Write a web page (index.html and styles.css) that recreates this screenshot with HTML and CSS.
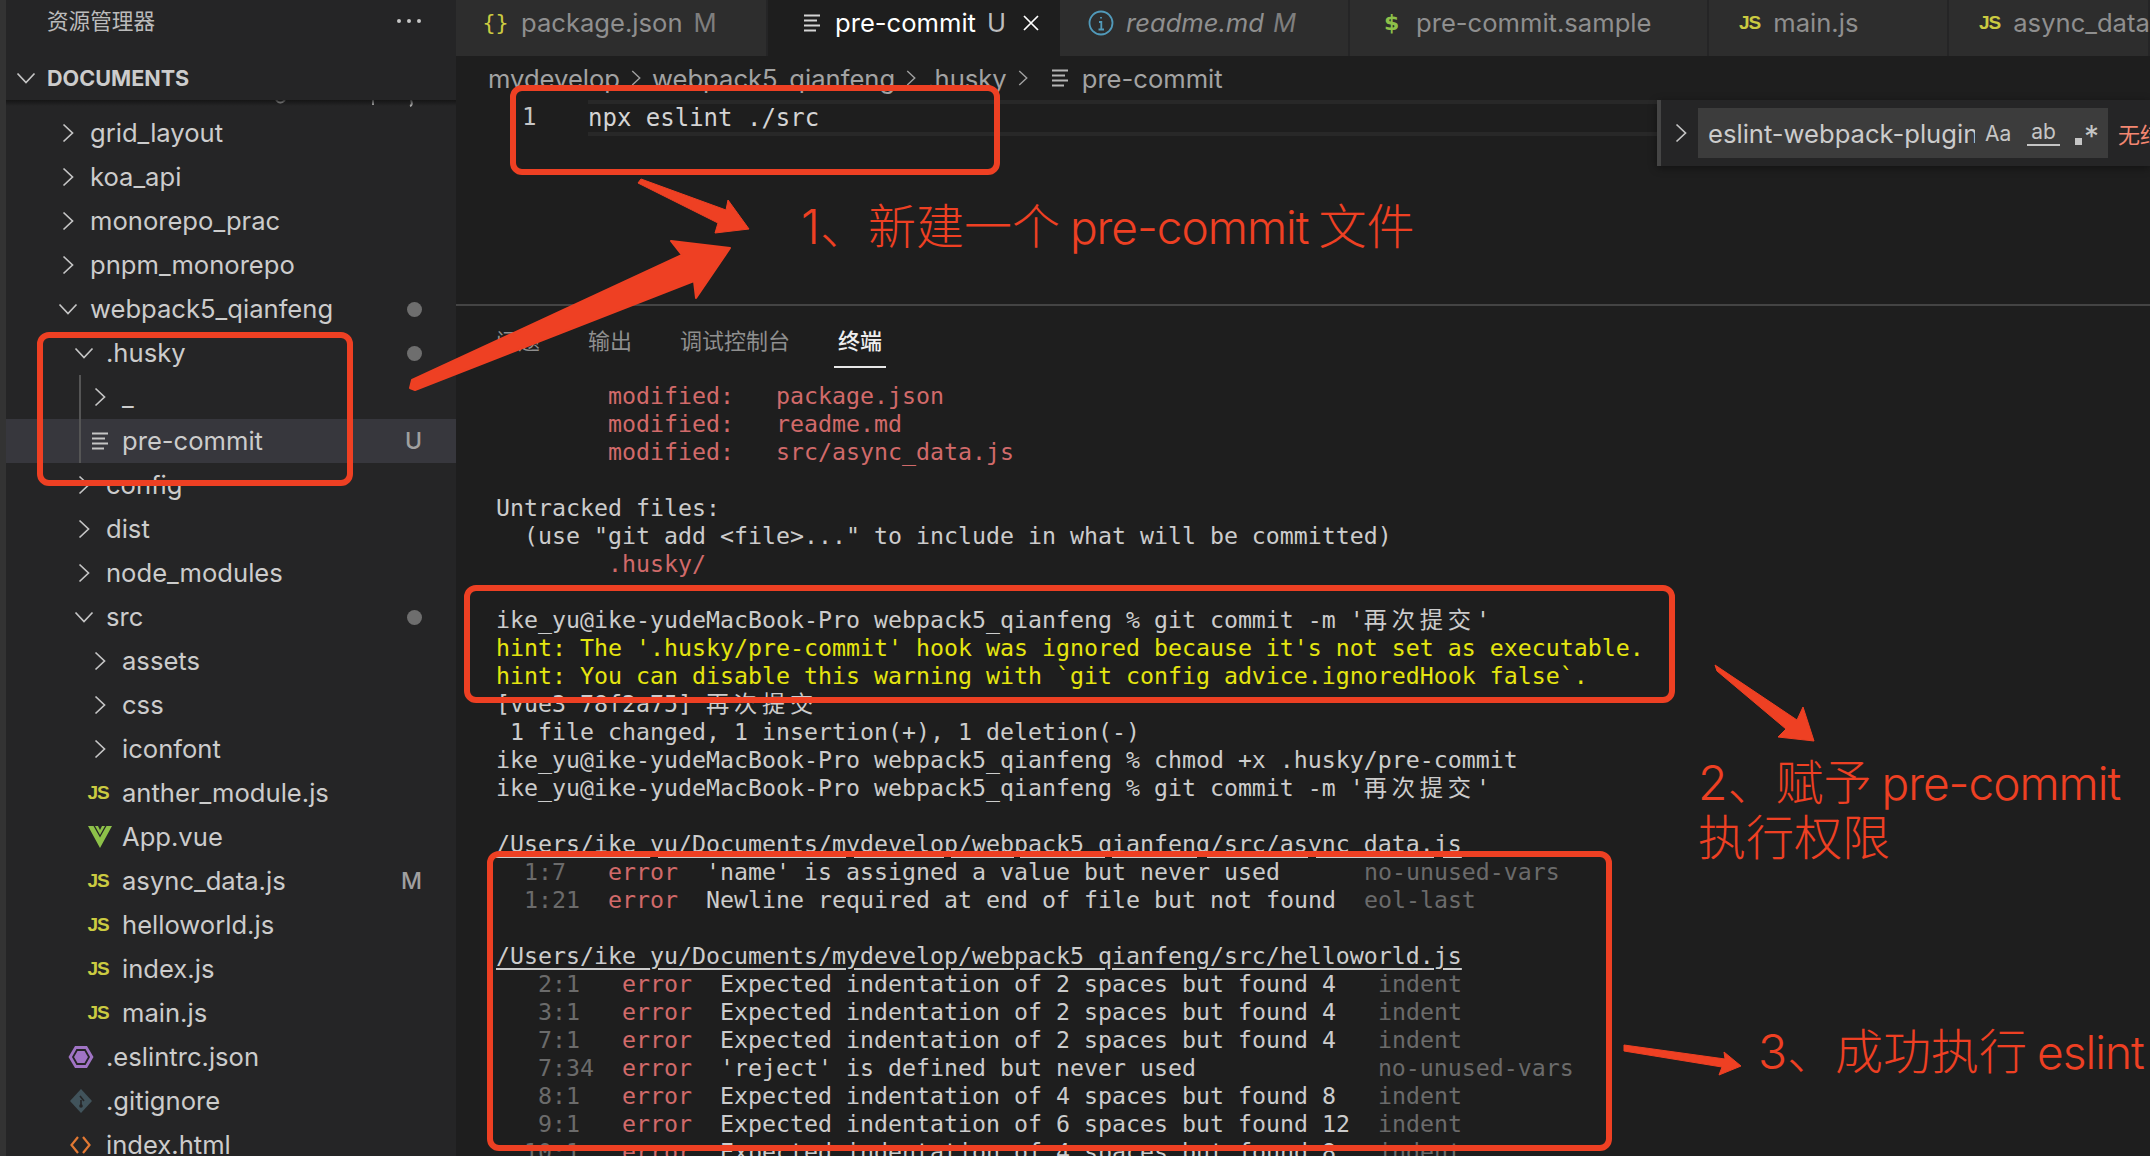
FILE: index.html
```html
<!DOCTYPE html>
<html lang="zh-CN">
<head>
<meta charset="utf-8">
<title>pre-commit</title>
<link rel="stylesheet" href="styles.css">
</head>
<body>
<svg class="defs" aria-hidden="true">
  <symbol id="cr" viewBox="0 0 12 20"><path d="M1.5 1.5 10.5 10 1.5 18.5" fill="none" stroke="currentColor" stroke-width="1.7"/></symbol>
  <symbol id="cd" viewBox="0 0 20 12"><path d="M1.5 1.5 10 10.5 18.5 1.5" fill="none" stroke="currentColor" stroke-width="1.7"/></symbol>
  <symbol id="doc" viewBox="0 0 17 18"><path d="M0 1.5h16M0 6.5h13M0 11.5h16M0 16.5h12" fill="none" stroke="currentColor" stroke-width="2"/></symbol>
</svg>
<div class="app">
  <aside class="sidebar">
    <div class="side-title"><span>资源管理器</span><span class="dots"><i></i><i></i><i></i></span></div>
    <div class="section"><svg class="sec-chev"><use href="#cd"/></svg><span>DOCUMENTS</span></div>
    <div class="tree">
      <div class="ghost"><svg width="450" height="11"><path d="M276 0q4 5 9 0M373 0v5M411 0q2 5-1 6" fill="none" stroke="#b0b0b0" stroke-width="2"/></svg></div>
      <div class="row d1"><span class="slot"><svg class="cr"><use href="#cr"/></svg></span><span class="label">grid_layout</span></div>
      <div class="row d1"><span class="slot"><svg class="cr"><use href="#cr"/></svg></span><span class="label">koa_api</span></div>
      <div class="row d1"><span class="slot"><svg class="cr"><use href="#cr"/></svg></span><span class="label">monorepo_prac</span></div>
      <div class="row d1"><span class="slot"><svg class="cr"><use href="#cr"/></svg></span><span class="label">pnpm_monorepo</span></div>
      <div class="row d1"><span class="slot"><svg class="cd"><use href="#cd"/></svg></span><span class="label">webpack5_qianfeng</span><span class="dot"></span></div>
      <div class="row d2"><span class="slot"><svg class="cd"><use href="#cd"/></svg></span><span class="label">.husky</span><span class="dot"></span></div>
      <div class="row d3 guide"><span class="slot"><svg class="cr"><use href="#cr"/></svg></span><span class="label">_</span></div>
      <div class="row d3 guide selected"><span class="slot"><svg class="docicon"><use href="#doc"/></svg></span><span class="label">pre-commit</span><span class="badge">U</span></div>
      <div class="row d2"><span class="slot"><svg class="cr"><use href="#cr"/></svg></span><span class="label">config</span></div>
      <div class="row d2"><span class="slot"><svg class="cr"><use href="#cr"/></svg></span><span class="label">dist</span></div>
      <div class="row d2"><span class="slot"><svg class="cr"><use href="#cr"/></svg></span><span class="label">node_modules</span></div>
      <div class="row d2"><span class="slot"><svg class="cd"><use href="#cd"/></svg></span><span class="label">src</span><span class="dot"></span></div>
      <div class="row d3"><span class="slot"><svg class="cr"><use href="#cr"/></svg></span><span class="label">assets</span></div>
      <div class="row d3"><span class="slot"><svg class="cr"><use href="#cr"/></svg></span><span class="label">css</span></div>
      <div class="row d3"><span class="slot"><svg class="cr"><use href="#cr"/></svg></span><span class="label">iconfont</span></div>
      <div class="row d3"><span class="slot"><span class="js">JS</span></span><span class="label">anther_module.js</span></div>
      <div class="row d3"><span class="slot"><svg class="vue" viewBox="0 0 24 22"><path d="M0 0h5.5L12 11.5 18.500 0H24L12 22z" fill="#8dc149"/><path d="M7 0h3l2 4 2-4h3l-5 9z" fill="#8dc149"/></svg></span><span class="label">App.vue</span></div>
      <div class="row d3"><span class="slot"><span class="js">JS</span></span><span class="label">async_data.js</span><span class="badge">M</span></div>
      <div class="row d3"><span class="slot"><span class="js">JS</span></span><span class="label">helloworld.js</span></div>
      <div class="row d3"><span class="slot"><span class="js">JS</span></span><span class="label">index.js</span></div>
      <div class="row d3"><span class="slot"><span class="js">JS</span></span><span class="label">main.js</span></div>
      <div class="row d2"><span class="slot"><svg class="eslint" viewBox="0 0 26 24"><path d="M7 1h12l6.500 11L19 23H7L.5 12z" fill="#a074c4"/><path d="M9 5h8l4 7-4 7H9l-4-7z" fill="#a074c4" stroke="#252526" stroke-width="1.800"/></svg></span><span class="label">.eslintrc.json</span></div>
      <div class="row d2"><span class="slot"><svg class="git" viewBox="0 0 22 24"><path d="M11 0 22 12 11 24 0 12z" fill="#41535b"/><path d="M10 7 14 12M11 11v6" fill="none" stroke="#252526" stroke-width="1.600"/><circle cx="11" cy="17" r="1.800" fill="#252526"/></svg></span><span class="label">.gitignore</span></div>
      <div class="row d2"><span class="slot"><svg class="html" viewBox="0 0 21 20"><path d="M8 2 1.500 10 8 18M13 2l6.500 8-6.500 8" fill="none" stroke="#e37933" stroke-width="2.200"/></svg></span><span class="label">index.html</span></div>
    </div>
  </aside>

  <main class="main">
    <div class="tabs">
      <div class="tab t1"><span class="ti braces">{ }</span><span class="tn">package.json</span><span class="ts">M</span></div>
      <div class="tab t2 active"><svg class="docicon"><use href="#doc"/></svg><span class="tn">pre-commit</span><span class="ts">U</span><svg class="close" viewBox="0 0 16 16"><path d="M1 1l14 14M15 1 1 15" fill="none" stroke="#fff" stroke-width="1.700"/></svg></div>
      <div class="tab t3 it"><svg class="info" viewBox="0 0 26 26"><circle cx="13" cy="13" r="11.500" fill="none" stroke="#519aba" stroke-width="1.800"/><path d="M13 7v1.600M11 12h2.300v7M10.500 19.500h5.500" fill="none" stroke="#519aba" stroke-width="1.800"/></svg><span class="tn">readme.md</span><span class="ts">M</span></div>
      <div class="tab t4"><span class="ti dollar">$</span><span class="tn">pre-commit.sample</span></div>
      <div class="tab t5"><span class="js">JS</span><span class="tn">main.js</span></div>
      <div class="tab t6"><span class="js">JS</span><span class="tn">async_data.js</span></div>
    </div>
    <div class="crumbs">
      <span>mydevelop</span><svg class="cr"><use href="#cr"/></svg>
      <span>webpack5_qianfeng</span><svg class="cr"><use href="#cr"/></svg>
      <span>.husky</span><svg class="cr"><use href="#cr"/></svg>
      <svg class="docicon"><use href="#doc"/></svg><span>pre-commit</span>
    </div>
    <section class="editor">
      <div class="line"><span class="num">1</span><span class="code">npx eslint ./src</span></div>
      <div class="find">
        <svg class="cr"><use href="#cr"/></svg>
        <div class="find-input"><span class="find-text">eslint-webpack-plugin</span><span class="opt aa">Aa</span><span class="opt ab">ab</span><span class="opt re"><i></i>*</span></div>
        <span class="noresult">无结果</span>
      </div>
    </section>
    <section class="panel">
      <div class="ptabs"><span>问题</span><span>输出</span><span>调试控制台</span><span class="on">终端</span></div>
      <div class="term">
        <div class="l r">        modified:   package.json</div>
        <div class="l r">        modified:   readme.md</div>
        <div class="l r">        modified:   src/async_data.js</div>
        <div class="l"> </div>
        <div class="l">Untracked files:</div>
        <div class="l">  (use "git add &lt;file&gt;..." to include in what will be committed)</div>
        <div class="l r">        .husky/</div>
        <div class="l"> </div>
        <div class="l">ike_yu@ike-yudeMacBook-Pro webpack5_qianfeng % git commit -m '<span class="c">再次提交</span>'</div>
        <div class="l y">hint: The '.husky/pre-commit' hook was ignored because it's not set as executable.</div>
        <div class="l y">hint: You can disable this warning with `git config advice.ignoredHook false`.</div>
        <div class="l">[vue3 78f2a75] <span class="c">再次提交</span></div>
        <div class="l"> 1 file changed, 1 insertion(+), 1 deletion(-)</div>
        <div class="l">ike_yu@ike-yudeMacBook-Pro webpack5_qianfeng % chmod +x .husky/pre-commit</div>
        <div class="l">ike_yu@ike-yudeMacBook-Pro webpack5_qianfeng % git commit -m '<span class="c">再次提交</span>'</div>
        <div class="l"> </div>
        <div class="l"><u>/Users/ike_yu/Documents/mydevelop/webpack5_qianfeng/src/async_data.js</u></div>
        <div class="l"><b>  1:7</b>   <em>error</em>  'name' is assigned a value but never used      <b>no-unused-vars</b></div>
        <div class="l"><b>  1:21</b>  <em>error</em>  Newline required at end of file but not found  <b>eol-last</b></div>
        <div class="l"> </div>
        <div class="l"><u>/Users/ike_yu/Documents/mydevelop/webpack5_qianfeng/src/helloworld.js</u></div>
        <div class="l"><b>   2:1</b>   <em>error</em>  Expected indentation of 2 spaces but found 4   <b>indent</b></div>
        <div class="l"><b>   3:1</b>   <em>error</em>  Expected indentation of 2 spaces but found 4   <b>indent</b></div>
        <div class="l"><b>   7:1</b>   <em>error</em>  Expected indentation of 2 spaces but found 4   <b>indent</b></div>
        <div class="l"><b>   7:34</b>  <em>error</em>  'reject' is defined but never used             <b>no-unused-vars</b></div>
        <div class="l"><b>   8:1</b>   <em>error</em>  Expected indentation of 4 spaces but found 8   <b>indent</b></div>
        <div class="l"><b>   9:1</b>   <em>error</em>  Expected indentation of 6 spaces but found 12  <b>indent</b></div>
        <div class="l"><b>  10:1</b>   <em>error</em>  Expected indentation of 4 spaces but found 8   <b>indent</b></div>
      </div>
    </section>
  </main>
</div>

<svg class="marks" viewBox="0 0 2150 1156" aria-hidden="true">
  <g fill="none" stroke="#ee4023" stroke-width="6">
    <rect x="513" y="88" width="484" height="84" rx="9"/>
    <rect x="40" y="335" width="310" height="148" rx="9"/>
    <rect x="467" y="588" width="1205" height="112" rx="9"/>
    <rect x="490" y="854" width="1119" height="294" rx="9"/>
  </g>
  <g fill="#ee4023" stroke="#ee4023" stroke-linejoin="round">
    <path d="M641 179 726 210 728 200 749 229 715 233 718 223 638 183z" stroke-width="1"/>
    <path d="M412 380 682 255 671 241 730 248 696 298 694 281 415 390 410 388z" stroke-width="2"/>
    <path d="M1715 665 1797 720 1803 707 1814 741 1778 737 1786 729 1717 671z" stroke-width="1"/>
    <path d="M1624 1045 1725 1059 1724 1052 1741 1066 1719 1075 1722 1067 1624 1051z" stroke-width="1"/>
  </g>
</svg>
<div class="note n1">1、新建一个<span class="lat">pre-commit</span>文件</div>
<div class="note n2">2、赋予<span class="lat">pre-commit</span><br>执行权限</div>
<div class="note n3">3、成功执行<span class="lat">eslint</span></div>
</body>
</html>
```
FILE: styles.css
```css
* { box-sizing: border-box; }
html, body { margin: 0; width: 2150px; height: 1156px; overflow: hidden; background: #1e1e1e; }
body { position: relative; font-family: Inter, "Noto Sans CJK SC", sans-serif; color: #ccc; }
.defs { position: absolute; width: 0; height: 0; }
svg { display: block; flex: none; }
.cr { width: 12px; height: 20px; color: #c5c5c5; }
.cd { width: 20px; height: 12px; color: #c5c5c5; }
.docicon { width: 17px; height: 18px; color: #c5c5c5; }

.app { display: flex; width: 2150px; height: 1156px; }

/* sidebar */
.sidebar { width: 456px; flex: none; height: 100%; background: #252526; border-left: 6px solid #333; display: flex; flex-direction: column; overflow: hidden; }
.side-title { height: 38px; padding: 0 35px 0 41px; display: flex; align-items: center; justify-content: space-between; font-size: 21.600px; color: #bbb; }
.dots { display: flex; gap: 6px; margin-top: 4px; }
.dots i { width: 4px; height: 4px; border-radius: 50%; background: #c5c5c5; }
.section { height: 44px; margin-top: 18px; padding-left: 10px; display: flex; align-items: center; font-size: 21.600px; font-weight: 700; color: #ccc; }
.sec-chev { width: 20px; height: 12px; margin-right: 11px; color: #c5c5c5; }
.tree { flex: 1; min-height: 0; overflow: hidden; position: relative; }
.tree::before { content: ""; position: absolute; left: 0; right: 0; top: 0; height: 6px; background: linear-gradient(#111c, #1110); z-index: 1; }
.ghost { height: 11px; overflow: hidden; margin-left: -6px; }
.row { height: 44px; display: flex; align-items: center; font-size: 25.600px; color: #ccc; padding-right: 34px; position: relative; white-space: nowrap; }
.row .label { flex: 1; margin-bottom: 2px; }
.slot { width: 28px; height: 44px; flex: none; margin-right: 8px; display: flex; align-items: center; justify-content: center; }
.d1 { padding-left: 48px; }
.d2 { padding-left: 64px; }
.d3 { padding-left: 80px; }
.guide::before { content: ""; position: absolute; left: 73px; top: 0; bottom: 0; width: 2px; background: #555; }
.selected { background: #37373d; }
.dot { width: 15px; height: 15px; border-radius: 50%; background: #6e6e6e; }
.badge { font-size: 23px; font-weight: 500; color: #a0a0a0; }
.js { font-family: "Liberation Sans", sans-serif; font-weight: 700; font-size: 19px; color: #cbcb41; letter-spacing: -1px; }
.slot .js { margin-left: -4px; }
.vue { width: 24px; height: 22px; margin-left: -1px; }
.eslint { width: 26px; height: 24px; margin-left: -7px; }
.git { width: 22px; height: 24px; margin-left: -7px; }
.html { width: 21px; height: 20px; margin-left: -7px; }

/* main */
.main { flex: 1; min-width: 0; display: flex; flex-direction: column; }
.tabs { height: 56px; flex: none; display: flex; background: #252526; overflow: hidden; }
.tab { height: 56px; flex: none; display: flex; align-items: center; padding-bottom: 11px; background: #2d2d2d; border-right: 2px solid #252526; font-size: 25.600px; color: #8f8f8f; white-space: nowrap; }
.tn { margin-left: 14px; }
.ts { margin-left: 11px; color: #7e7e7e; }
.t1 { width: 312px; padding-left: 26px; }
.t1 .tn { margin-left: 17px; }
.t2 { width: 292px; padding-left: 36px; background: #1e1e1e; color: #fff; border-right: 0; }
.t2 .docicon { color: #d4d4d4; }
.t2 .ts { color: #bdbdbd; }
.t3 { width: 290px; padding-left: 28px; font-style: italic; }
.t3 .tn { margin-left: 12px; }
.t3 .ts { margin-left: 9px; }
.t4 { width: 359px; padding-left: 34px; }
.t5 { width: 240px; padding-left: 30px; }
.t6 { width: 201px; padding-left: 30px; }
.t5 .tn, .t6 .tn { margin-left: 13px; }
.t4 .tn { margin-left: 18px; }
.braces { font-family: "DejaVu Sans", sans-serif; font-size: 22px; color: #cbcb41; width: 22px; letter-spacing: -4px; white-space: pre; }
.dollar { font-family: "DejaVu Sans", sans-serif; font-weight: 700; font-size: 22px; color: #8dc149; width: 14px; }
.info { width: 26px; height: 26px; }
.close { width: 16px; height: 16px; margin-left: 17px; }

.crumbs { height: 44px; flex: none; padding-left: 32px; display: flex; align-items: center; font-size: 25.600px; color: #a3a3a3; white-space: nowrap; }
.crumbs .cr { margin: 0 11px; height: 18px; width: 10px; color: #a0a0a0; }
.crumbs .docicon { margin: 0 13px 0 13px; color: #b5b5b5; }

.editor { height: 204px; flex: none; position: relative; font-family: "DejaVu Sans Mono", monospace; font-size: 24px; }
.line { height: 36px; display: flex; align-items: center; }
.num { width: 132px; padding-left: 66px; color: #c6c6c6; margin-top: -2px; }
.code { flex: 1; height: 36px; line-height: 28px; border: solid #282828; border-width: 4px 0; color: #d4d4d4; margin-right: 20px; }
.find { position: absolute; top: 0; right: 0; width: 493px; height: 66px; background: #252526; border-left: 4px solid #454545; box-shadow: 0 2px 8px #0006; display: flex; align-items: center; font-family: Inter, "Noto Sans CJK SC", sans-serif; overflow: hidden; white-space: nowrap; }
.find .cr { margin-left: 14px; width: 12px; height: 26px; }
.find-input { width: 410px; height: 50px; margin-left: 11px; background: #3c3c3c; display: flex; align-items: center; position: relative; flex: none; color: #ccc; }
.find-text { width: 267px; margin-left: 10px; overflow: hidden; font-size: 25.600px; flex: none; }
.opt { font-size: 21px; color: #c5c5c5; flex: none; }
.aa { margin-left: 10px; }
.ab { margin-left: 16px; border-bottom: 2px solid #c5c5c5; padding: 0 4px; line-height: 24px; }
.re { margin-left: 15px; display: flex; align-items: flex-start; font-size: 30px; line-height: 30px; height: 24px; }
.re i { width: 7px; height: 7px; background: #c5c5c5; align-self: flex-end; margin-right: 2px; }
.noresult { margin-left: 10px; font-size: 22px; color: #f48771; }

.panel { flex: 1; min-height: 0; border-top: 2px solid #444; padding-left: 40px; overflow: hidden; }
.ptabs { display: flex; gap: 48px; padding-top: 20px; font-size: 22px; line-height: 30px; color: #8f8f8f; }
.ptabs span { padding-bottom: 10px; height: 42px; }
.ptabs .on { color: #eee; margin: 0 -4px; padding: 0 4px 10px; border-bottom: 2px solid #e7e7e7; font-weight: 500; }
.term { margin-top: 14px; font-family: "DejaVu Sans Mono", "Noto Sans CJK SC", monospace; font-size: 23.250px; color: #ccc; }
.l { height: 28px; line-height: 28px; white-space: pre; }
.r { color: #d16a6a; }
.y { color: #e5e510; }
.c { letter-spacing: 4.750px; font-family: "Noto Sans CJK SC", sans-serif; line-height: 0; }
.l u { text-underline-offset: 4px; }
.l b { font-weight: 400; color: #6b6b6b; }
.l em { font-style: normal; color: #d16a6a; }

/* annotations */
.marks { position: absolute; left: 0; top: 0; width: 2150px; height: 1156px; pointer-events: none; }
.note { position: absolute; font-family: Inter, "Noto Sans CJK SC", sans-serif; font-size: 48px; line-height: 55px; color: #ee4023; font-weight: 300; white-space: nowrap; }
.lat { font-size: 46px; margin: 0 10px; letter-spacing: -1px; line-height: 0; }
.n1 { left: 801px; top: 199px; }
.n2 { left: 1698px; top: 755px; }
.n3 { left: 1758px; top: 1024px; }
```
